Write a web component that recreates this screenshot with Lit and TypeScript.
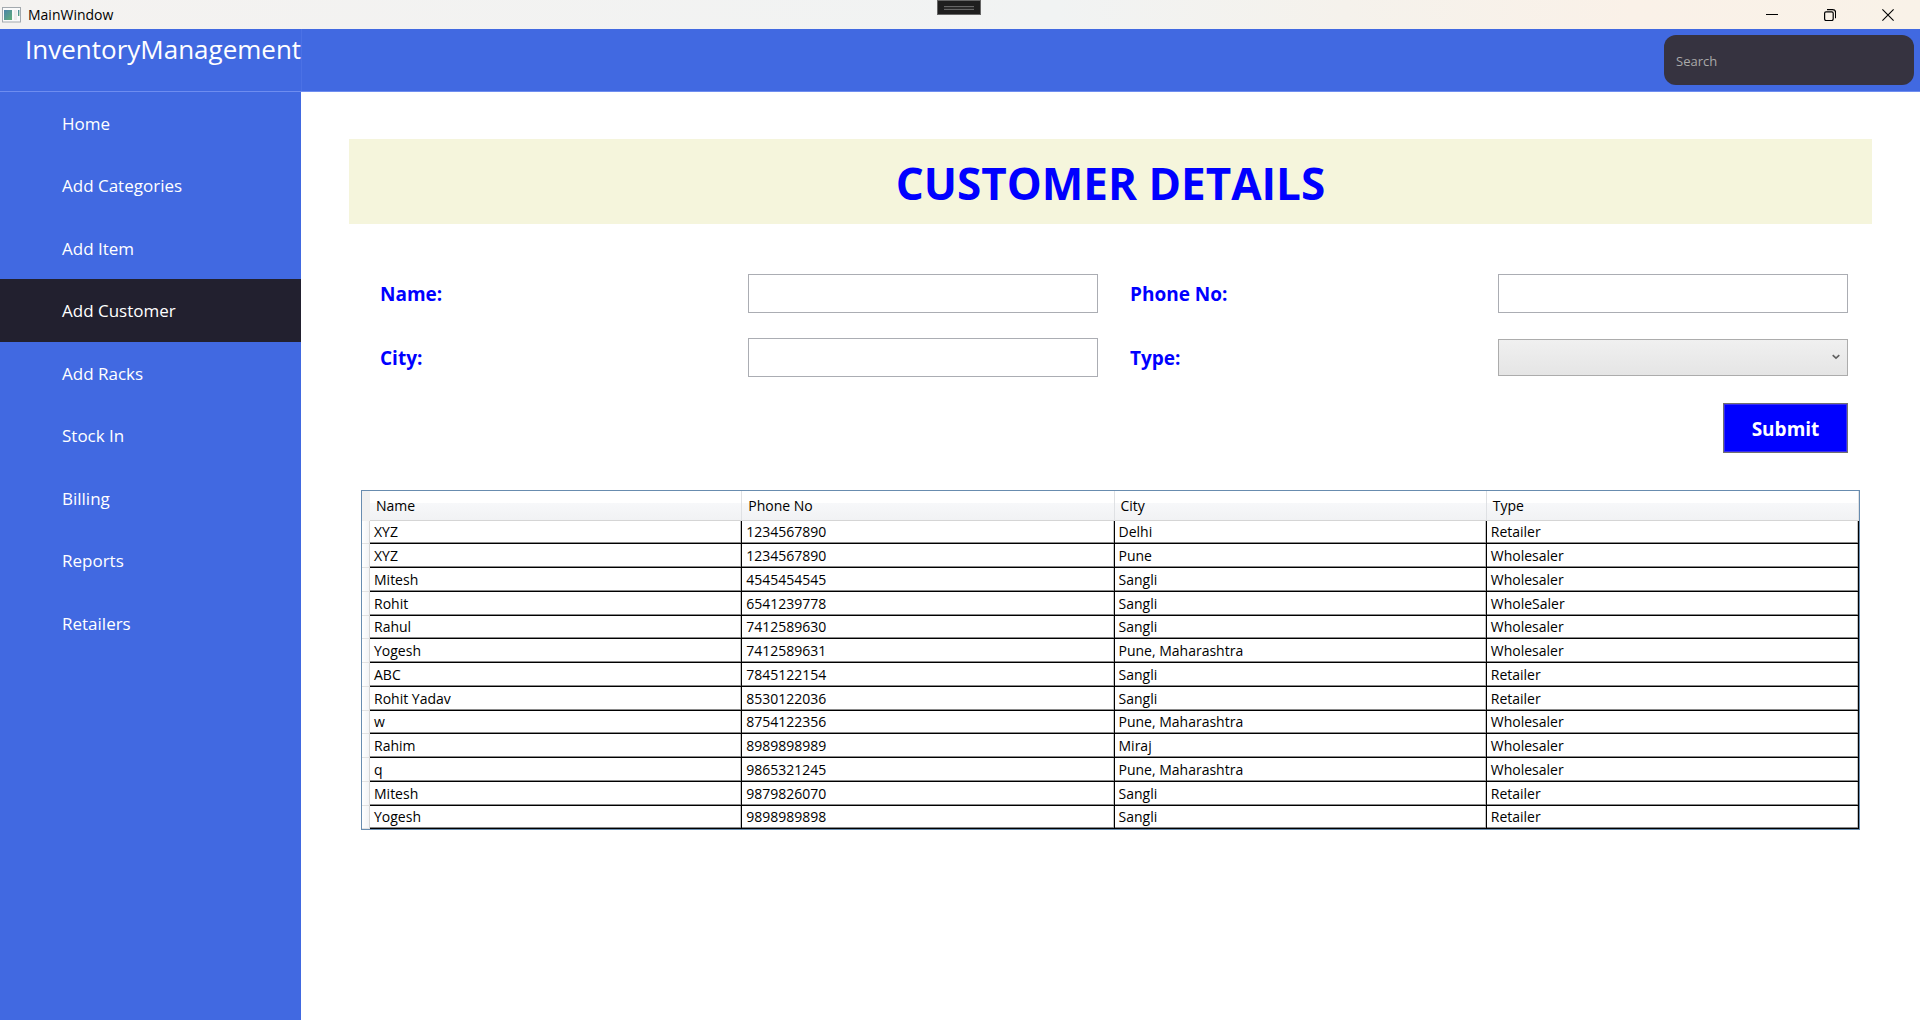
import { LitElement, html, css, svg } from "lit";
import { customElement, state } from "lit/decorators.js";

interface Customer {
  name: string;
  phone: string;
  city: string;
  type: string;
}

const NAV_ITEMS = [
  "Home",
  "Add Categories",
  "Add Item",
  "Add Customer",
  "Add Racks",
  "Stock In",
  "Billing",
  "Reports",
  "Retailers",
];

const CUSTOMERS: Customer[] = [
  { name: "XYZ", phone: "1234567890", city: "Delhi", type: "Retailer" },
  { name: "XYZ", phone: "1234567890", city: "Pune", type: "Wholesaler" },
  { name: "Mitesh", phone: "4545454545", city: "Sangli", type: "Wholesaler" },
  { name: "Rohit", phone: "6541239778", city: "Sangli", type: "WholeSaler" },
  { name: "Rahul", phone: "7412589630", city: "Sangli", type: "Wholesaler" },
  { name: "Yogesh", phone: "7412589631", city: "Pune, Maharashtra", type: "Wholesaler" },
  { name: "ABC", phone: "7845122154", city: "Sangli", type: "Retailer" },
  { name: "Rohit Yadav", phone: "8530122036", city: "Sangli", type: "Retailer" },
  { name: "w", phone: "8754122356", city: "Pune, Maharashtra", type: "Wholesaler" },
  { name: "Rahim", phone: "8989898989", city: "Miraj", type: "Wholesaler" },
  { name: "q", phone: "9865321245", city: "Pune, Maharashtra", type: "Wholesaler" },
  { name: "Mitesh", phone: "9879826070", city: "Sangli", type: "Retailer" },
  { name: "Yogesh", phone: "9898989898", city: "Sangli", type: "Retailer" },
];

const minimizeIcon = svg`<path d="M0 5.5h12" stroke="#000" fill="none"/>`;
const restoreIcon = svg`
  <rect x="0.6" y="2.9" width="8.6" height="8.6" rx="1.4" stroke="#000" stroke-width="1.2" fill="none"/>
  <path d="M3 .6h5.6a3 3 0 0 1 3 3v5.6" stroke="#000" stroke-width="1.2" fill="none"/>`;
const closeIcon = svg`<path d="M.4 .4l11.2 11.2M11.6 .4L.4 11.6" stroke="#000" stroke-width="1.1" fill="none"/>`;

@customElement("title-bar")
export class TitleBar extends LitElement {
  static styles = css`
    :host {
      display: flex;
      position: relative;
      align-items: center;
      height: 29px;
      background: linear-gradient(90deg, #f4f2f0 0%, #f1f3f3 55%, #f5f2ec 70%, #faf1e8 85%, #f9f2e8 100%);
      font-size: 14px;
      color: #000;
    }
    .app-icon {
      width: 19px;
      height: 16px;
      margin: 0 7px 0 2px;
    }
    .name {
      flex: 1;
    }
    .handle {
      position: absolute;
      top: 0;
      left: 50%;
      transform: translateX(-50%);
      box-sizing: border-box;
      width: 44px;
      height: 15px;
      margin-left: -1px;
      padding: 5px 6px;
      border: 1px solid #666;
      background: #1f1f1f;
    }
    .grip {
      height: 2px;
      border-top: 1px solid #666;
      border-bottom: 1px solid #666;
      background: #2b2b2b;
    }
    .control {
      display: grid;
      place-items: center;
      width: 58px;
      height: 29px;
      padding: 0;
      border: 0;
      background: none;
    }
    .control:hover {
      background: #e9e1d8;
    }
    .control svg {
      width: 12px;
      height: 12px;
    }
    .controls {
      display: flex;
      padding-right: 3px;
    }
  `;

  render() {
    return html`
      <svg class="app-icon" viewBox="0 0 19 16" aria-hidden="true">
        <defs>
          <linearGradient id="pane" x1="0" y1="0" x2="1" y2="1">
            <stop offset="0" stop-color="#4a83a8" />
            <stop offset="1" stop-color="#5fae78" />
          </linearGradient>
        </defs>
        <rect x=".5" y=".5" width="18" height="14.5" fill="#fafafa" stroke="#a3a9ae" />
        <rect x="2" y="3" width="8" height="10" fill="url(#pane)" />
        <rect x="12" y="3" width="3" height="10" fill="#ececec" />
        <rect x="16" y="3" width="1.4" height="6" fill="url(#pane)" />
      </svg>
      <span class="name">MainWindow</span>
      <div class="handle"><div class="grip"></div></div>
      <div class="controls">
        <button class="control" aria-label="Minimize"><svg viewBox="0 0 12 12">${minimizeIcon}</svg></button>
        <button class="control" aria-label="Restore"><svg viewBox="0 0 12 12">${restoreIcon}</svg></button>
        <button class="control" aria-label="Close"><svg viewBox="0 0 12 12">${closeIcon}</svg></button>
      </div>
    `;
  }
}

@customElement("side-nav")
export class SideNav extends LitElement {
  @state() private active = "Add Customer";

  static styles = css`
    :host {
      display: block;
      background: #4169e1;
    }
    .list {
      margin: 0;
      padding: 0;
      list-style: none;
    }
    .link {
      display: flex;
      align-items: center;
      height: 62px;
      padding-left: 62px;
      font-size: 17px;
      color: #fff;
      text-decoration: none;
    }
    .item:nth-child(even) .link {
      height: 63px;
    }
    .link.active {
      background: #22202f;
    }
  `;

  render() {
    return html`
      <nav>
        <ul class="list">
          ${NAV_ITEMS.map(
            (label) => html`
              <li class="item">
                <a
                  class="link ${label === this.active ? "active" : ""}"
                  href="#"
                  @click=${(e: Event) => {
                    e.preventDefault();
                    this.active = label;
                  }}
                  >${label}</a
                >
              </li>
            `
          )}
        </ul>
      </nav>
    `;
  }
}

@customElement("customer-form")
export class CustomerForm extends LitElement {
  static styles = css`
    .form {
      display: grid;
      grid-template-columns: repeat(4, 1fr);
      grid-auto-rows: 64px;
      align-items: center;
    }
    .label {
      padding: 2px 0 0 19px;
      font-size: 19px;
      font-weight: 700;
      color: #00f;
    }
    .field {
      box-sizing: border-box;
      height: 39px;
      margin: 0 13px 0 12px;
      padding: 0 8px;
      border: 1px solid #abadb3;
      border-radius: 0;
      background: #fff;
      font: inherit;
      font-size: 19px;
    }
    .picker {
      position: relative;
      display: grid;
      margin: 0 13px 0 12px;
    }
    .select {
      appearance: none;
      height: 37px;
      padding: 0 30px 0 8px;
      border: 1px solid #acacac;
      border-radius: 0;
      background: linear-gradient(#f0f0f0, #e5e5e5);
      font: inherit;
      font-size: 19px;
    }
    .chevron {
      position: absolute;
      right: 8px;
      top: 15px;
      width: 8px;
      height: 6px;
      pointer-events: none;
    }
    .submit {
      grid-column: 4;
      justify-self: end;
      align-self: end;
      width: 125px;
      height: 50px;
      margin: 0 13px 0 0;
      padding: 2px 0 0;
      border: 1px solid #707070;
      background: #00f;
      box-shadow: inset 0 0 0 1px #3a30f0;
      color: #fff;
      font: inherit;
      font-size: 19px;
      font-weight: 700;
    }
  `;

  render() {
    return html`
      <form class="form" @submit=${(e: Event) => e.preventDefault()}>
        <label class="label" for="name">Name:</label>
        <input class="field" id="name" type="text" />
        <label class="label" for="phone">Phone No:</label>
        <input class="field" id="phone" type="tel" />
        <label class="label" for="city">City:</label>
        <input class="field" id="city" type="text" />
        <label class="label" for="type">Type:</label>
        <div class="picker">
          <select class="select" id="type">
            <option value=""></option>
            <option>Retailer</option>
            <option>Wholesaler</option>
          </select>
          <svg class="chevron" viewBox="0 0 8 6" aria-hidden="true">
            <path d="M.7 1.2L4 4.2 7.3 1.2" fill="none" stroke="#606060" stroke-width="1.6" />
          </svg>
        </div>
        <button class="submit" type="submit">Submit</button>
      </form>
    `;
  }
}

@customElement("customer-table")
export class CustomerTable extends LitElement {
  static styles = css`
    :host {
      display: block;
      margin-right: 1px;
      border: 1px solid #688caf;
    }
    .grid {
      width: 100%;
      table-layout: fixed;
      border-collapse: separate;
      border-spacing: 0;
      font-size: 14px;
      line-height: 20px;
      color: #000;
    }
    .gutter-col {
      width: 8px;
    }
    .head {
      box-sizing: border-box;
      height: 30px;
      padding: 0 0 0 6px;
      border-right: 1px solid #dfe1e4;
      border-bottom: 1px solid #d5d5d5;
      background: linear-gradient(#fff 0 40%, #f7f8fa 40%, #f1f2f4);
      font-weight: 400;
      text-align: left;
    }
    .corner {
      padding: 0;
      border: 0;
      background: #f0f0f0;
    }
    .cell,
    .gutter {
      box-sizing: border-box;
      height: 24px;
      padding: 0 0 0 4px;
      border-right: 1px solid #000;
      border-bottom: 1px solid #000;
      box-shadow: inset 0 -1px #8a8a8a, inset -1px 0 #c4c4c4;
      background: #fff;
    }
    .row:nth-child(4n + 1) .cell,
    .row:nth-child(4n + 1) .gutter {
      height: 23px;
    }
    .gutter {
      padding: 0;
      border-right: 1px solid #d5d5d5;
      border-bottom: 1px solid #e2e2e2;
      box-shadow: none;
      background: linear-gradient(90deg, #fff, #f3f4f6);
    }
  `;

  render() {
    return html`
      <table class="grid">
        <colgroup>
          <col class="gutter-col" />
          <col />
          <col />
          <col />
          <col />
        </colgroup>
        <thead>
          <tr>
            <td class="head corner"></td>
            <th class="head" scope="col">Name</th>
            <th class="head" scope="col">Phone No</th>
            <th class="head" scope="col">City</th>
            <th class="head" scope="col">Type</th>
          </tr>
        </thead>
        <tbody>
          ${CUSTOMERS.map(
            (c) => html`
              <tr class="row">
                <td class="gutter"></td>
                <td class="cell">${c.name}</td>
                <td class="cell">${c.phone}</td>
                <td class="cell">${c.city}</td>
                <td class="cell">${c.type}</td>
              </tr>
            `
          )}
        </tbody>
      </table>
    `;
  }
}

@customElement("app-root")
export class AppRoot extends LitElement {
  static styles = css`
    :host {
      display: flex;
      flex-direction: column;
      min-height: 100vh;
      background: #fff;
      font-family: "Open Sans", "Noto Sans", sans-serif;
    }
    .header {
      display: flex;
      justify-content: space-between;
      height: 62px;
      border-bottom: 1px solid #6e8df0;
      background: #4169e1;
    }
    .brand {
      box-sizing: border-box;
      width: 302px;
      padding-left: 25px;
      border-right: 1px solid #4b71e5;
      font-size: 26px;
      line-height: 40px;
      color: #fff;
      white-space: nowrap;
    }
    .search {
      box-sizing: border-box;
      width: 250px;
      height: 50px;
      margin: 6px 6px 0 0;
      padding: 2px 12px 0;
      border: 0;
      border-radius: 12px;
      background: #363340;
      color: #fff;
      font: inherit;
      font-size: 13px;
    }
    .search::placeholder {
      color: #a9a9a9;
      opacity: 1;
    }
    .body {
      display: grid;
      grid-template-columns: 301px 1fr;
      flex: 1;
    }
    .content {
      padding: 47px 48px 48px;
    }
    .banner {
      margin: 0 0 37px;
      padding-top: 4px;
      background: #f5f5dc;
      font-size: 44px;
      line-height: 81px;
      font-weight: 700;
      text-align: center;
      color: #00f;
    }
    .panel {
      display: grid;
      gap: 37px;
      margin: 0 11px 0 12px;
    }
  `;

  render() {
    return html`
      <title-bar></title-bar>
      <header class="header">
        <div class="brand">InventoryManagement</div>
        <input class="search" type="search" placeholder="Search" aria-label="Search" />
      </header>
      <div class="body">
        <side-nav></side-nav>
        <main class="content">
          <h1 class="banner">CUSTOMER DETAILS</h1>
          <div class="panel">
            <customer-form></customer-form>
            <customer-table></customer-table>
          </div>
        </main>
      </div>
    `;
  }
}
